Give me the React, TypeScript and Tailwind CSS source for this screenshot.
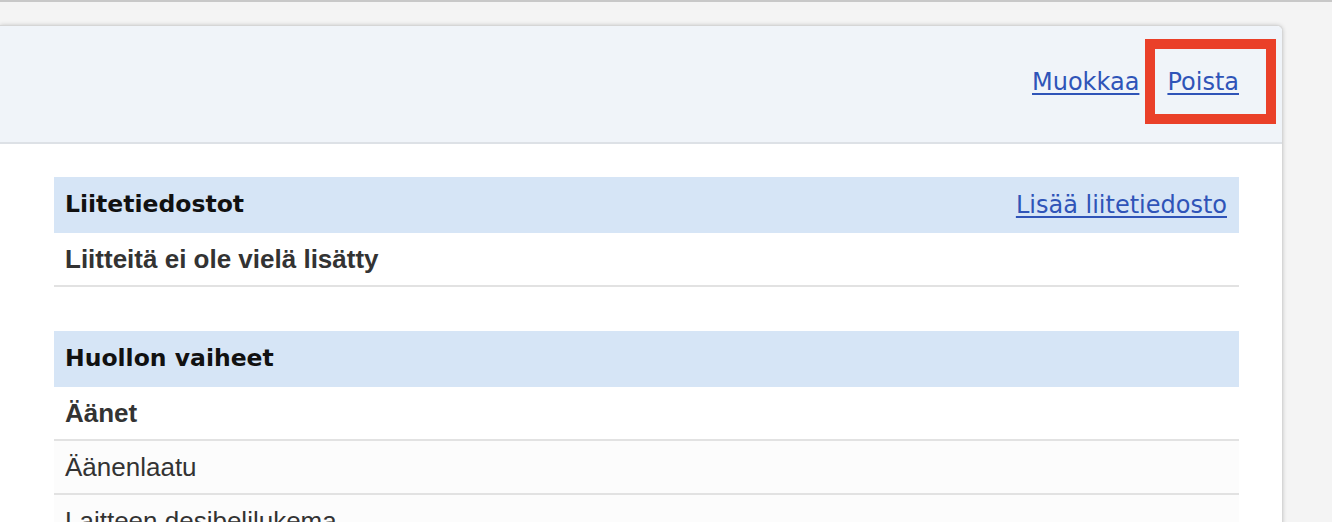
import React from 'react'

const verdana = "font-['DejaVu_Sans',Verdana,sans-serif]"
const arial = "font-['Liberation_Sans',Arial,sans-serif]"

const SectionHeader: React.FC<{ title: string; action?: string }> = ({ title, action }) => (
  <div className="flex h-[56px] items-center justify-between bg-[#d6e5f6] pl-[11px] pr-[12px]">
    <h2 className={`${verdana} text-[23.5px] font-bold text-[#111]`}>{title}</h2>
    {action && (
      <a href="#" className={`${verdana} text-[24px] text-[#2f54b8] underline underline-offset-[3px]`}>
        {action}
      </a>
    )}
  </div>
)

const Row: React.FC<{ text: string; bold?: boolean; tint?: boolean }> = ({ text, bold, tint }) => (
  <div
    className={`flex h-[54px] items-center border-b-2 border-[#e2e2e2] px-[11px] ${tint ? 'bg-[#fcfcfc]' : 'bg-white'}`}
  >
    <span className={`${arial} text-[26px] text-[#333] ${bold ? 'font-bold' : ''}`}>{text}</span>
  </div>
)

export default function App() {
  return (
    <div className="h-[522px] overflow-hidden border-t-[2px] border-[#c8c8c8] bg-[#f4f4f4] pt-[23px]">
      <div className="w-[1283px] overflow-hidden rounded-tr-[6px] border-t border-r border-[#d6d6d6] bg-white shadow-[0_0_4px_rgba(0,0,0,0.18)]">
        {/* header */}
        <div className="flex h-[118px] items-start justify-end gap-[28px] border-b-2 border-[#dde1e6] bg-[#f0f4f9] pt-[38px] pr-[43px]">
          <a href="#" className={`${verdana} text-[24px] text-[#2f54b8] underline underline-offset-[3px]`}>
            Muokkaa
          </a>
          <span className="relative">
            <a href="#" className={`${verdana} text-[24px] text-[#2f54b8] underline underline-offset-[3px]`}>
              Poista
            </a>
            <span className="pointer-events-none absolute -top-[25px] -bottom-[24px] -left-[22px] -right-[37px] border-[10px] border-[#ea4029]" />
          </span>
        </div>

        {/* body */}
        <div className="pt-[33px] pl-[54px] pr-[43px] pb-[40px]">
          <section>
            <SectionHeader title="Liitetiedostot" action="Lisää liitetiedosto" />
            <Row text="Liitteitä ei ole vielä lisätty" bold />
          </section>

          <section className="mt-[44px]">
            <SectionHeader title="Huollon vaiheet" />
            <Row text="Äänet" bold />
            <Row text="Äänenlaatu" tint />
            <Row text="Laitteen desibelilukema" tint />
          </section>
        </div>
      </div>
    </div>
  )
}
